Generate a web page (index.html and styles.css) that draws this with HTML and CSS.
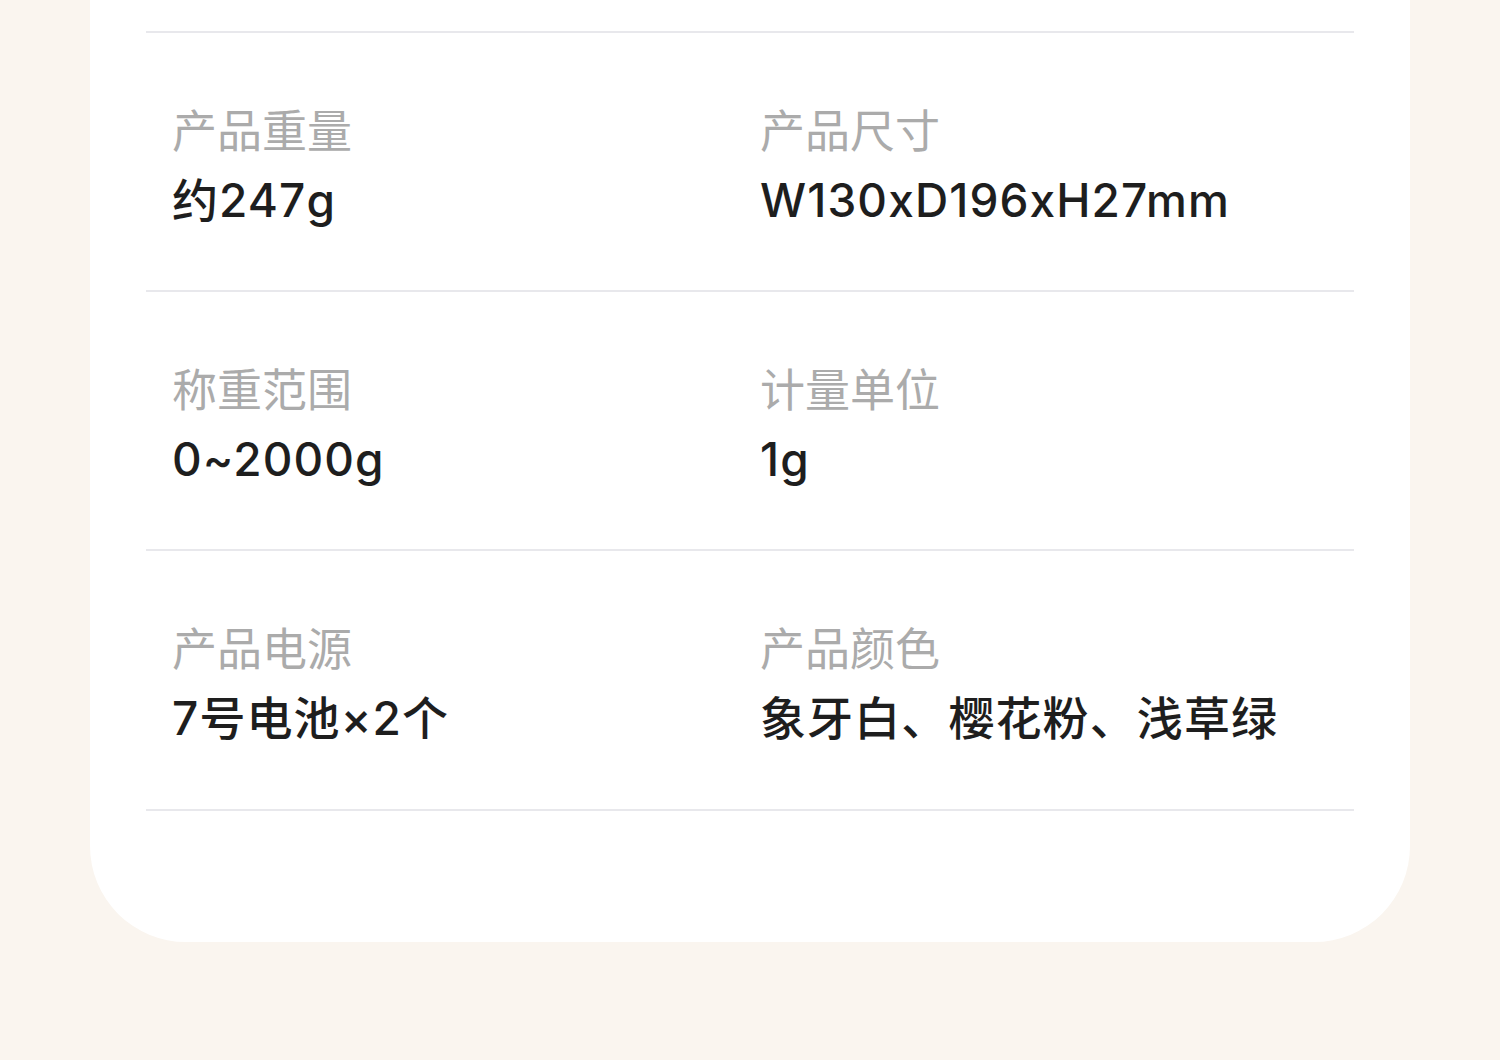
FILE: index.html
```html
<!DOCTYPE html>
<html lang="zh-CN">
<head>
<meta charset="utf-8">
<title>产品参数</title>
<link rel="stylesheet" href="styles.css">
</head>
<body>
<div class="card">
  <div class="row">
    <div class="cell"><div class="label">产品重量</div><div class="value">约247g</div></div>
    <div class="cell"><div class="label">产品尺寸</div><div class="value">W130xD196xH27mm</div></div>
  </div>
  <div class="row">
    <div class="cell"><div class="label">称重范围</div><div class="value">0~2000g</div></div>
    <div class="cell"><div class="label">计量单位</div><div class="value">1g</div></div>
  </div>
  <div class="row row-last">
    <div class="cell"><div class="label">产品电源</div><div class="value">7号电池×2个</div></div>
    <div class="cell"><div class="label">产品颜色</div><div class="value">象牙白、樱花粉、浅草绿</div></div>
  </div>
  <div class="end"></div>
</div>
</body>
</html>
```
FILE: styles.css
```css
html, body {
  margin: 0;
  padding: 0;
  background: #faf5ef;
}
body {
  width: 1500px;
  height: 1060px;
  overflow: hidden;
  font-family: Inter, "Noto Sans CJK SC", sans-serif;
}
.card {
  margin-left: 90px;
  width: 1320px;
  background: #ffffff;
  border-radius: 0 0 96px 96px;
  padding: 31px 56px 0;
  box-sizing: border-box;
}
.row {
  display: grid;
  grid-template-columns: 588px 1fr;
  border-top: 2px solid #e8e8ec;
  padding: 68px 0 62px;
}
.row-last {
  padding-bottom: 63px;
}
.cell {
  padding-left: 26px;
}
.label {
  font-size: 45px;
  line-height: 56px;
  color: #ababab;
  font-family: "Noto Sans CJK SC", sans-serif;
  font-weight: 400;
}
.value {
  margin-top: 15px;
  font-size: 46px;
  line-height: 56px;
  color: #1e1e1e;
  letter-spacing: 1.1px;
  font-weight: 500;
}
.end {
  border-top: 2px solid #e8e8ec;
  height: 131px;
}
```
